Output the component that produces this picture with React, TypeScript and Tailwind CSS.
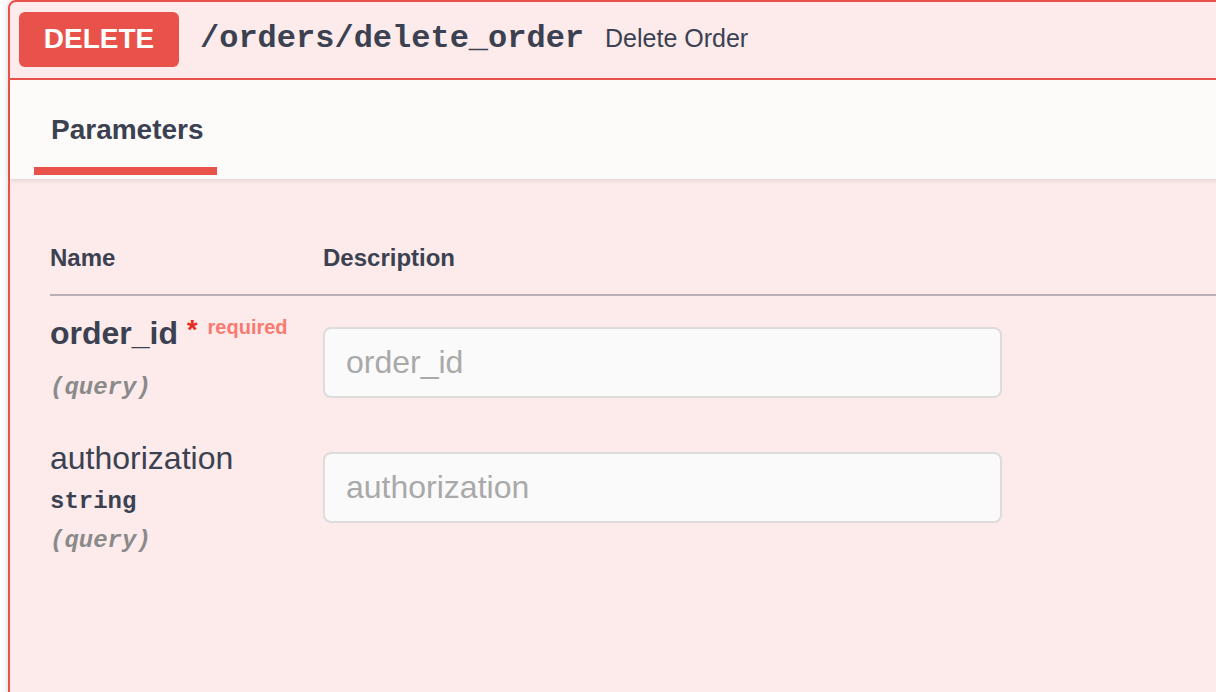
import React from 'react';

const sans = { fontFamily: '"Liberation Sans", Arial, sans-serif' };
const mono = { fontFamily: '"Liberation Mono", "Courier New", monospace' };

interface ParamRowProps {
  name: string;
  required?: boolean;
  type?: string;
  placeholder: string;
  className?: string;
}

const ParamRow: React.FC<ParamRowProps> = ({ name, required = false, type, placeholder, className = '' }) => {
  return (
    <div className={`flex ${className}`}>
      <div className="w-[273px] shrink-0">
        <div className="flex items-start">
          <span className={`text-[32px] leading-[40px] text-[#3b4151] ${required ? 'font-bold' : ''}`}>
            {name}
          </span>
          {required && (
            <span className="ml-[9px] mt-[2px] flex items-start">
              <span className="text-[27px] leading-[30px] font-bold text-[#e8291c]">*</span>
              <span className="ml-[10px] text-[20px] leading-[24px] font-bold text-[#f77b70]">required</span>
            </span>
          )}
        </div>
        {type && (
          <div className="mt-[9px] text-[24px] leading-[30px] font-bold text-[#3b4151]" style={mono}>
            {type}
          </div>
        )}
        <div
          className={`${type ? 'mt-[9px]' : 'mt-[20px]'} text-[24px] leading-[30px] italic font-bold text-[#8a8a8a]`}
          style={mono}
        >
          (query)
        </div>
      </div>
      <div className="pt-[14px]">
        <input
          placeholder={placeholder}
          className="w-[679px] h-[71px] rounded-[8px] border-2 border-[#dcdcdc] bg-[#fafafa] pl-[21px] text-[32px] text-[#3b4151] placeholder:text-[#a9a9a9] outline-none"
          style={sans}
        />
      </div>
    </div>
  );
};

const App: React.FC = () => {
  return (
    <div className="w-[1216px] h-[692px] overflow-hidden bg-white" style={sans}>
      <div className="ml-[8px] w-[1240px] min-h-[720px] border-2 border-[#e9524a] rounded-tl-[8px] bg-[#fcebea] shadow-[0_0_6px_rgba(0,0,0,0.19)]">
        {/* summary */}
        <div className="flex items-center h-[78px] border-b-2 border-[#e9524a] pl-[9px] pb-[2px]">
          <div className="flex items-center justify-center w-[160px] h-[55px] rounded-[6px] bg-[#e9524a] text-[28px] font-bold text-white">
            DELETE
          </div>
          <span className="ml-[21px] text-[32px] font-bold text-[#3b4151]" style={mono}>
            /orders/delete_order
          </span>
          <span className="ml-[21px] text-[25px] text-[#3b4151]">Delete Order</span>
        </div>

        {/* tab header */}
        <div className="relative h-[99px] bg-[#fdfbfa] shadow-[0_2px_4px_rgba(0,0,0,0.1)] pl-[24px]">
          <div className="inline-flex flex-col h-full w-[183px]">
            <div className="flex-1 flex items-center pl-[17px] pt-[12px]">
              <span className="text-[28px] font-bold text-[#3b4151]">Parameters</span>
            </div>
            <div className="h-[8px] bg-[#e9524a] mb-[4px]" />
          </div>
        </div>

        {/* params table */}
        <div className="pl-[40px] pt-[64px]">
          <div className="flex pb-[21px] border-b-2 border-[#b9afb4] text-[24px] leading-[30px] font-bold text-[#3b4151]">
            <div className="w-[273px] shrink-0">Name</div>
            <div>Description</div>
          </div>
          <ParamRow name="order_id" required placeholder="order_id" className="pt-[17px]" />
          <ParamRow name="authorization" type="string" placeholder="authorization" className="pt-[35px]" />
        </div>
      </div>
    </div>
  );
};

export default App;
